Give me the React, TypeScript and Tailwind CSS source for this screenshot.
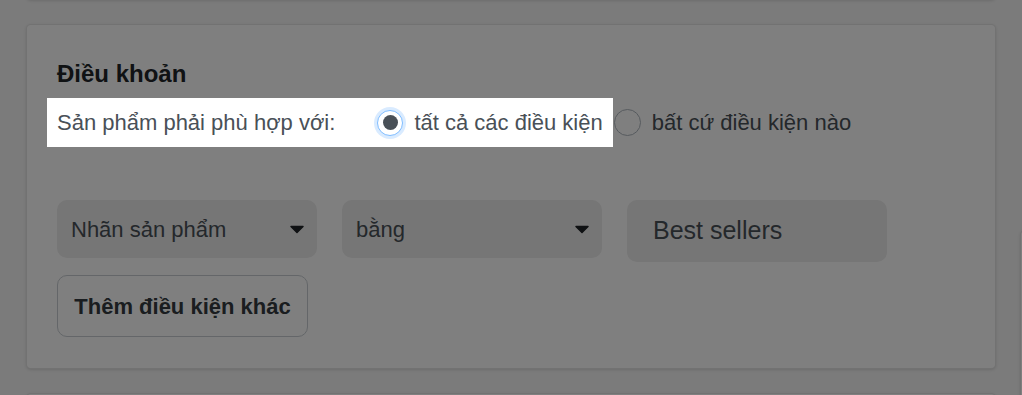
import React from "react";

function Caret() {
  return (
    <svg width="16" height="9" viewBox="0 0 16 9" className="shrink-0">
      <path d="M2 1.5h12L8 7.5z" fill="#1f2327" stroke="#1f2327" strokeWidth="1.5" strokeLinejoin="round" />
    </svg>
  );
}

function Select({ label }: { label: string }) {
  return (
    <div className="flex h-[58px] w-[260px] shrink-0 items-center justify-between rounded-[10px] bg-[#ececec] pl-[14px] pr-[12px] text-[22px] text-[#495057]">
      <span>{label}</span>
      <Caret />
    </div>
  );
}

export default function App() {
  return (
    <div className="relative flex h-screen overflow-hidden bg-[#f6f6f6] pl-[26px] font-['Liberation_Sans',Arial,sans-serif]">
      <div className="flex w-[970px] shrink-0 flex-col gap-[24px]">
        {/* card above, only its bottom edge shows */}
        <div className="-mt-[60px] h-[60px] shrink-0 rounded-[5px] border border-black/10 bg-white shadow-[0_1px_3px_rgba(0,0,0,0.12)]" />

        <div className="shrink-0 rounded-[5px] border border-black/10 bg-white pb-[31px] pl-[30px] pr-[30px] pt-[35px] shadow-[0_1px_3px_rgba(0,0,0,0.12)]">
          <h2 className="text-[24px] font-bold leading-[28px] text-[#212529]">Điều khoản</h2>

          <div className="mt-[10px] flex items-center text-[22px] text-[#495057]">
            {/* highlighted part of the tour */}
            <div className="relative z-20 -ml-[10px] flex h-[49px] items-center bg-white pl-[10px] pr-[10px]">
              <span>Sản phẩm phải phù hợp với:</span>
              <span className="ml-[42px] flex h-[26px] w-[26px] items-center justify-center rounded-full border border-[#80bdff] bg-white shadow-[0_0_0_3px_rgba(0,123,255,0.15)]">
                <span className="h-[15px] w-[15px] rounded-full bg-[#495057]" />
              </span>
              <span className="ml-[11px]">tất cả các điều kiện</span>
            </div>
            <span className="ml-[1px] h-[27px] w-[27px] rounded-full border border-[#adb5bd] bg-white" />
            <span className="ml-[11px]">bất cứ điều kiện nào</span>
          </div>

          <div className="mt-[53px] flex items-start gap-[25px]">
            <Select label="Nhãn sản phẩm" />
            <Select label="bằng" />
            <div className="flex h-[62px] w-[260px] shrink-0 items-center rounded-[10px] bg-[#ececec] pl-[26px] text-[25px] text-[#495057]">
              Best sellers
            </div>
          </div>

          <button
            type="button"
            className="mt-[13px] flex h-[62px] w-[251px] items-center justify-center rounded-[10px] border border-[#c8cdd2] bg-white text-[22px] font-bold text-[#343a40]"
          >
            Thêm điều kiện khác
          </button>
        </div>

        <div className="h-[200px] shrink-0 rounded-[5px] border border-black/10 bg-white shadow-[0_1px_3px_rgba(0,0,0,0.12)]" />
      </div>

      <div className="ml-[24px] w-[300px] shrink-0">
        <div className="mt-[230px] h-[300px] rounded-[5px] border border-black/10 bg-white shadow-[0_1px_3px_rgba(0,0,0,0.12)]" />
      </div>

      {/* tour overlay */}
      <div className="fixed inset-0 z-10 bg-black/50" />
    </div>
  );
}
